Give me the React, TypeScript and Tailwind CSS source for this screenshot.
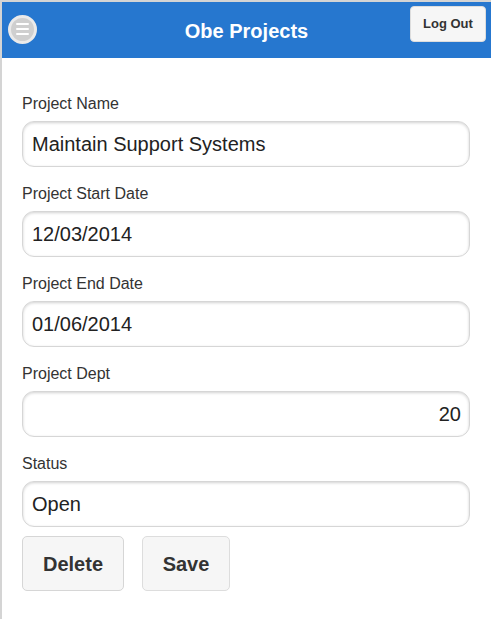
import React from "react";

const fields: { label: string; value: string; right?: boolean }[] = [
  { label: "Project Name", value: "Maintain Support Systems" },
  { label: "Project Start Date", value: "12/03/2014" },
  { label: "Project End Date", value: "01/06/2014" },
  { label: "Project Dept", value: "20", right: true },
  { label: "Status", value: "Open" },
];

export default function App() {
  return (
    <div
      className="w-[491px] h-[619px] bg-white border-t-2 border-l-2 border-[#d4d4d4] overflow-hidden"
      style={{ fontFamily: '"Liberation Sans", Arial, sans-serif' }}
    >
      <header className="h-[56px] bg-[#2677cf] flex items-center justify-between pl-[6px] pr-[5px] relative">
        <div className="w-[29px] h-[29px] rounded-full border-[3px] border-[#eaeaea] bg-[#cfcfcf] flex flex-col items-center justify-center gap-[3px] mb-[2px]">
          <div className="w-[13px] h-[2px] bg-white rounded" />
          <div className="w-[13px] h-[2px] bg-white rounded" />
          <div className="w-[13px] h-[2px] bg-white rounded" />
        </div>
        <h1 className="absolute left-0 right-0 text-center text-white font-bold text-[20px] pointer-events-none top-[17px] leading-[24px]">
          Obe Projects
        </h1>
        <button className="mb-[13px] h-[36px] w-[76px] bg-[#f6f6f6] border border-[#dddddd] rounded-[4px] text-[13px] font-bold text-[#333]">
          Log Out
        </button>
      </header>
      <main className="pt-[37px] pl-[20px] pr-[21px]">
        {fields.map((f, i) => (
          <div key={f.label} className={i === fields.length - 1 ? "mb-[9px]" : "mb-[18px]"}>
            <div className="h-[18px] leading-[18px] mb-[8px] text-[16px] text-[#333]">
              {f.label}
            </div>
            <div
              className={`h-[46px] rounded-[12px] border border-[#d6d6d6] bg-white shadow-[inset_0_1px_3px_rgba(0,0,0,0.18)] flex items-center text-[20px] text-[#222] ${
                f.right ? "justify-end pr-[8px]" : "pl-[9px]"
              }`}
            >
              {f.value}
            </div>
          </div>
        ))}
        <div className="flex gap-[18px]">
          <button className="h-[55px] w-[102px] bg-[#f6f6f6] border border-[#d6d6d6] rounded-[5px] text-[20px] font-bold text-[#333]">
            Delete
          </button>
          <button className="h-[55px] w-[88px] bg-[#f6f6f6] border border-[#dddddd] rounded-[5px] text-[20px] font-bold text-[#333]">
            Save
          </button>
        </div>
      </main>
    </div>
  );
}
